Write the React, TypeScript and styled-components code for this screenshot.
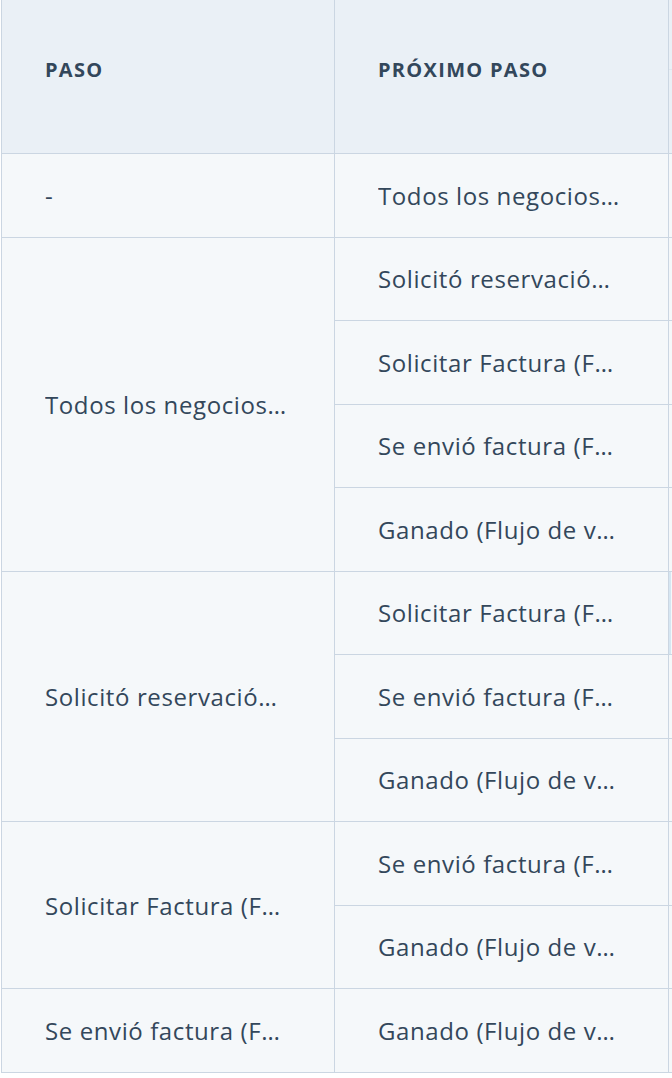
import React from "react";
import styled, { createGlobalStyle } from "styled-components";

const GlobalStyle = createGlobalStyle`
  html, body {
    margin: 0;
    padding: 0;
    background: #ffffff;
    overflow: hidden;
  }
  body {
    font-family: "Open Sans", "Liberation Sans", sans-serif;
    color: #33475b;
  }
`;

const Viewport = styled.div`
  width: 672px;
  height: 1078px;
  overflow: hidden;
  padding-left: 1px;
  box-sizing: border-box;
`;

const Grid = styled.div`
  display: grid;
  grid-template-columns: 333px 334px 240px;
  grid-template-rows: 154px repeat(11, 83.5px);
  border-left: 1px solid #cbd6e2;
  width: max-content;
`;

const HeaderCell = styled.div<{ $col: number }>`
  grid-column: ${(p) => p.$col};
  grid-row: 1;
  background: #eaf0f6;
  border-right: 1px solid #cbd6e2;
  border-bottom: 1px solid #cbd6e2;
  display: flex;
  align-items: center;
  padding: 0 24px 14px 43px;
  font-size: 20px;
  font-weight: 700;
  letter-spacing: 1.3px;
  text-transform: uppercase;
  color: #33475b;
  position: relative;
`;

const HeaderRule = styled.span`
  position: absolute;
  left: 0;
  right: 0;
  top: 69px;
  border-top: 1px solid #dfe6ee;
`;

const Cell = styled.div<{ $col: number; $row: number; $span?: number; $edge?: boolean }>`
  grid-column: ${(p) => p.$col};
  grid-row: ${(p) => `${p.$row} / span ${p.$span ?? 1}`};
  background: #f5f8fa;
  border-right: 1px solid #cbd6e2;
  border-bottom: 1px solid #cbd6e2;
  display: flex;
  align-items: center;
  padding: 0 16px 0 43px;
  min-width: 0;
  position: relative;
  ${(p) => (p.$edge ? "box-shadow: inset 2px 0 0 #d6e6f2;" : "")}
`;

const CellText = styled.span`
  display: block;
  max-width: 270px;
  white-space: nowrap;
  overflow: hidden;
  text-overflow: ellipsis;
  font-size: 24px;
  font-weight: 400;
  letter-spacing: 0.6px;
  color: #33475b;
`;

type Group = { step: string; next: string[] };

const groups: Group[] = [
  { step: "-", next: ["Todos los negocios…"] },
  {
    step: "Todos los negocios…",
    next: [
      "Solicitó reservació…",
      "Solicitar Factura (F…",
      "Se envió factura (F…",
      "Ganado (Flujo de v…",
    ],
  },
  {
    step: "Solicitó reservació…",
    next: ["Solicitar Factura (F…", "Se envió factura (F…", "Ganado (Flujo de v…"],
  },
  { step: "Solicitar Factura (F…", next: ["Se envió factura (F…", "Ganado (Flujo de v…"] },
  { step: "Se envió factura (F…", next: ["Ganado (Flujo de v…"] },
];

export default function App() {
  let row = 2;
  const cells: React.ReactNode[] = [];
  groups.forEach((g, gi) => {
    cells.push(
      <Cell key={`s${gi}`} $col={1} $row={row} $span={g.next.length}>
        <CellText>{g.step}</CellText>
      </Cell>
    );
    g.next.forEach((n, ni) => {
      const r = row + ni;
      cells.push(
        <Cell key={`n${gi}-${ni}`} $col={2} $row={r}>
          <CellText>{n}</CellText>
        </Cell>
      );
      cells.push(<Cell key={`x${gi}-${ni}`} $col={3} $row={r} $edge={r === 7} />);
    });
    row += g.next.length;
  });

  return (
    <>
      <GlobalStyle />
      <Viewport>
        <Grid>
          <HeaderCell $col={1}>Paso</HeaderCell>
          <HeaderCell $col={2}>Próximo paso</HeaderCell>
          <HeaderCell $col={3}>
            <HeaderRule />
          </HeaderCell>
          {cells}
        </Grid>
      </Viewport>
    </>
  );
}
